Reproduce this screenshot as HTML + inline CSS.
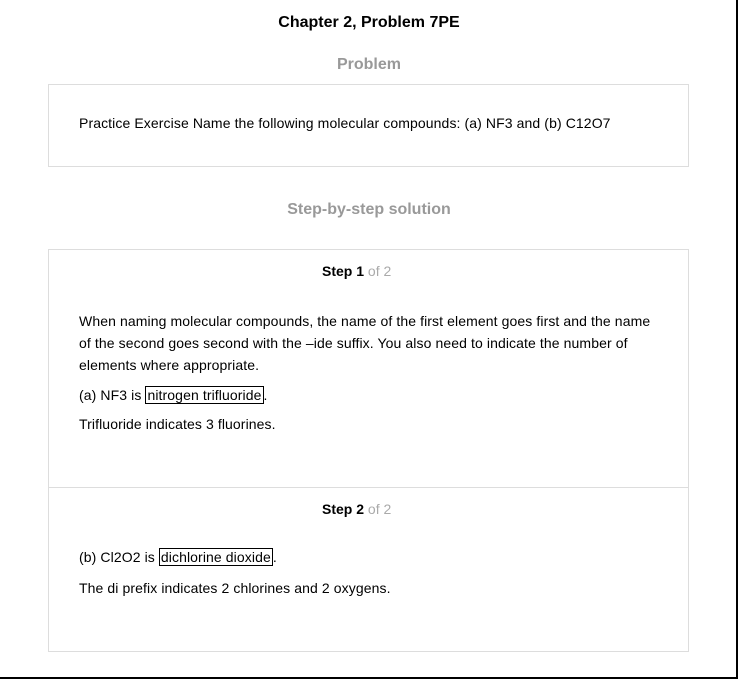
<!DOCTYPE html>
<html><head><style>
body{margin:0;width:738px;height:679px;position:relative;background:#fff;font-family:"Liberation Sans",Arial,sans-serif;color:#000;overflow:hidden}
.a{position:absolute;white-space:nowrap}
.box{position:absolute;border:1px solid #ddd;box-sizing:border-box}
.t{font-size:14px;line-height:22px;letter-spacing:0.1px}
.bx{border:1px solid #000;padding:0 1px}
.g{color:#aaa;font-weight:normal}
</style></head><body>
<div class="a" style="left:0;width:738px;text-align:center;top:14px;font-size:16px;font-weight:bold">Chapter 2, Problem 7PE</div>
<div class="a" style="left:0;width:738px;text-align:center;top:56px;font-size:16px;font-weight:bold;color:#999">Problem</div>
<div class="box" style="left:48px;top:84px;width:641px;height:83px"></div>
<div class="a t" style="left:79px;top:112px">Practice Exercise Name the following molecular compounds: (a) NF3 and (b) C12O7</div>
<div class="a" style="left:0;width:738px;text-align:center;top:201px;font-size:16px;font-weight:bold;color:#999">Step-by-step solution</div>
<div class="box" style="left:48px;top:249px;width:641px;height:403px"></div>
<div class="a" style="left:49px;top:487px;width:639px;height:1px;background:#ddd"></div>
<div class="a" style="left:322px;top:263px;font-size:14px;font-weight:bold">Step 1 <span class="g">of 2</span></div>
<div class="a t" style="left:79px;top:310px">When naming molecular compounds, the name of the first element goes first and the name<br>of the second goes second with the –ide suffix. You also need to indicate the number of<br>elements where appropriate.</div>
<div class="a t" style="left:79px;top:384px">(a) NF3 is <span class="bx">nitrogen trifluoride</span>.</div>
<div class="a t" style="left:79px;top:413px">Trifluoride indicates 3 fluorines.</div>
<div class="a" style="left:322px;top:501px;font-size:14px;font-weight:bold">Step 2 <span class="g">of 2</span></div>
<div class="a t" style="left:79px;top:546px">(b) Cl2O2 is <span class="bx">dichlorine dioxide</span>.</div>
<div class="a t" style="left:79px;top:577px">The di prefix indicates 2 chlorines and 2 oxygens.</div>
<div class="a" style="left:736px;top:0;width:2px;height:679px;background:#000"></div>
<div class="a" style="left:0;top:677px;width:738px;height:2px;background:#000"></div>
</body></html>
